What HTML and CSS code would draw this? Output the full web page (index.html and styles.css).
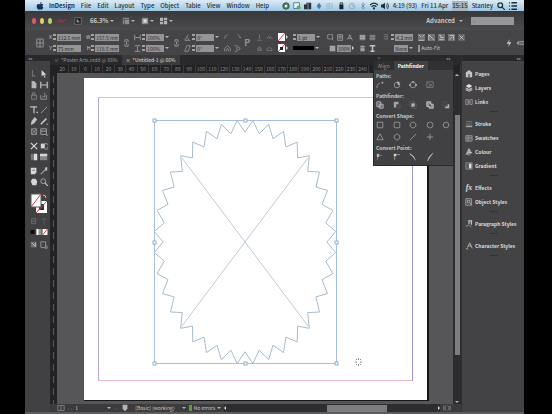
FILE: index.html
```html
<!DOCTYPE html>
<html lang="en">
<head>
    <meta charset="UTF-8">
    <meta name="viewport" content="width=device-width, initial-scale=1.0">
    <title>InDesign</title>
    <link rel="stylesheet" href="styles.css">
</head>
<body>
    <header class="menubar">
        <svg class="apple" viewBox="0 0 10 10"><path d="M5 3C6 2 8 2 9 3.3C7.600 4.300 7.800 6 9.200 6.700C8.600 8.500 7.500 10 6.500 9.600C5.500 9.200 5 9.300 4.200 9.600C2.500 10 .8 7.500.8 5.200C.8 2.800 3 2 5 3ZM5 2.500C5 1 6 .2 7 0C7 1.300 6.200 2.300 5 2.500Z"/></svg>
        <nav class="menus">
            <a href="#" class="app-name">InDesign</a>
            <a href="#">File</a>
            <a href="#">Edit</a>
            <a href="#">Layout</a>
            <a href="#">Type</a>
            <a href="#">Object</a>
            <a href="#">Table</a>
            <a href="#">View</a>
            <a href="#">Window</a>
            <a href="#">Help</a>
        </nav>
        <div class="tray">
            <svg viewBox="0 0 10 10"><circle cx="5" cy="5" r="4" fill="#4d8a64" stroke="#26483c"/><circle cx="5" cy="5" r="1.500" fill="#fff"/></svg>
            <svg viewBox="0 0 10 10"><rect x="1" y="1" width="7" height="7" fill="#e8f4fa" stroke="#3f6e92"/><circle cx="7" cy="7" r="2.500" fill="#5eb045"/></svg>
            <svg viewBox="0 0 10 10"><path d="M0 3h3V1h6v8H0Z" fill="#27333d"/><path d="M5 1v8" stroke="#94a9b8"/></svg>
            <svg viewBox="0 0 10 10"><path d="M5 1L8 5L5 9L2 5Z" fill="#3c81b4"/></svg>
            <svg viewBox="0 0 10 10"><path d="M1 2h7v6h-7zM1 5h7M4 2v6" fill="none" stroke="#9dbccd"/></svg>
            <svg viewBox="0 0 10 10"><path d="M3 3h5v6h-5z" fill="#16222e"/><path d="M4 3V1h3v2" fill="none" stroke="#16222e"/></svg>
            <svg viewBox="0 0 10 10"><circle cx="5" cy="5" r="3.500" fill="none" stroke="#8aa7bb"/><path d="M5 3v2h2" fill="none" stroke="#8aa7bb"/></svg>
            <svg viewBox="0 0 10 10"><path d="M3 3l4 4l-2 2V1l2 2l-4 4" fill="none" stroke="#6d8da4"/></svg>
            <svg viewBox="0 0 10 10"><path d="M0 4Q5-1 10 4M2 6Q5 3 8 6" fill="none" stroke="#1d3042" stroke-width="1.500"/><circle cx="5" cy="8" r="1.300" fill="#1d3042"/></svg>
            <svg viewBox="0 0 10 10"><path d="M0 3h2l3-2v8l-3-2h-2z" fill="#1d3042"/><path d="M7 3q1 2 0 4M8 1q3 4 0 8" fill="none" stroke="#1d3042"/></svg>
        </div>
        <div class="clock">
            <span>4:19 (93)</span>
            <span>Fri 11 Apr</span>
            <span class="time">15:15</span>
            <span>Stanley</span>
            <svg viewBox="0 0 10 10"><circle cx="4" cy="4" r="3" fill="none" stroke="#1d3042" stroke-width="1.500"/><path d="M6 6l4 4" stroke="#1d3042" stroke-width="1.500"/></svg>
            <svg viewBox="0 0 10 10"><path d="M0 1h1M3 1h7M0 5h1M3 5h7M0 9h1M3 9h7" stroke="#1d3042" stroke-width="2"/></svg>
        </div>
    </header>

    <div class="titlebar">
        <div class="lights">
            <button class="light red" aria-label="Close"></button>
            <button class="light yellow" aria-label="Minimise"></button>
            <button class="light green" aria-label="Zoom"></button>
        </div>
        <svg class="stock" viewBox="0 0 10 6"><path d="M0 5l3-3l2 2l5-3" fill="none" stroke="#8e3346" stroke-width="2"/></svg>
        <svg class="bridge" viewBox="0 0 10 10"><rect x="1" y="1" width="8" height="8" fill="#1f1e20" stroke="#77767a"/><path d="M4 3v4M4 5h2v2" stroke="#bbb" fill="none"/></svg>
        <button class="zoom">66.3% <i class="down"></i></button>
        <div class="views">
            <button aria-label="View options"><svg viewBox="0 0 10 10"><path d="M1 1h8v8h-8z" fill="#8d8c8e"/><path d="M1 3h8M3 3v6" stroke="#4b4a4c"/></svg><i class="down"></i></button>
            <button aria-label="Screen mode"><svg viewBox="0 0 10 10"><path d="M1 1h8v8h-8z" fill="#8d8c8e"/><path d="M3 3h4v4h-4z" fill="#e0e0e0"/></svg><i class="down"></i></button>
            <button aria-label="Arrange documents"><svg viewBox="0 0 10 10"><path d="M0 1h4v4h-4zM5 1h4v3h-4zM0 6h4v3h-4zM5 5h4v4h-4z" fill="#b5b4b6"/></svg><i class="down"></i></button>
        </div>
        <button class="advanced">Advanced <i class="down"></i></button>
        <input class="search" type="search" aria-label="Search" placeholder="⌕">
    </div>

    <div class="controls">
        <svg class="proxy" viewBox="0 0 10 12"><path d="M1 1h8v10h-8zM5 1v10M1 6h8" fill="none" stroke="#a3a2a4"/></svg>
        <div class="fields">
            <label>X <i class="step"></i><input class="wide" value="112.5 mm"></label>
            <label>Y <i class="step"></i><input class="wide" value="75 mm"></label>
        </div>
        <div class="fields">
            <label>W <i class="step"></i><input class="wide" value="157.5 mm"></label>
            <label>H <i class="step"></i><input class="wide" value="118.5 mm"></label>
        </div>
        <svg class="chain" viewBox="0 0 6 10"><path d="M1 4V1h4v3M1 6v3h4V6M3 3v4" fill="none" stroke="#a3a2a4"/></svg>
        <div class="fields scale">
            <label><svg viewBox="0 0 10 10"><path d="M1 1v8M9 1v8M2 5h6" fill="none" stroke="#b5b4b6"/></svg><i class="step"></i><input class="mid" aria-label="Scale X" value="100%"><i class="down"></i></label>
            <label><svg viewBox="0 0 10 10"><path d="M1 1h8M1 9h8M5 2v6" fill="none" stroke="#b5b4b6"/></svg><i class="step"></i><input class="mid" aria-label="Scale Y" value="100%"><i class="down"></i></label>
        </div>
        <svg class="chain" viewBox="0 0 6 10"><path d="M1 4V1h4v3M1 6v3h4V6M3 3v4" fill="none" stroke="#a3a2a4"/></svg>
        <div class="fields angle">
            <label><svg viewBox="0 0 10 10"><path d="M6 1l-5 8h8M5 5l2 4" fill="none" stroke="#a3a2a4"/></svg><i class="step"></i><input class="mid" aria-label="Rotation" value="0°"><i class="down"></i></label>
            <label><svg viewBox="0 0 10 10"><path d="M4 1h5l-3 8h-5z" fill="none" stroke="#a3a2a4"/></svg><i class="step"></i><input class="mid" aria-label="Shear" value="0°"><i class="down"></i></label>
        </div>
        <div class="icon-grid three">
            <svg viewBox="0 0 10 10"><path d="M1 6Q1 1 6 1M1 6l-1-2M1 6l2-2" fill="none" stroke="#858486"/></svg>
            <svg viewBox="0 0 10 10"><path d="M9 6Q9 1 4 1M9 6l1-2M9 6l-2-2" fill="none" stroke="#858486"/></svg>
            <b class="p-glyph">P</b>
            <svg viewBox="0 0 10 10"><path d="M1 9V5L5 1L9 5V9M3 9l2-4l2 4" fill="none" stroke="#a3a2a4"/></svg>
            <svg viewBox="0 0 10 10"><path d="M1 1h3l5 4l-5 4h-3M4 3v4" fill="none" stroke="#a3a2a4"/></svg>
        </div>
        <div class="icon-grid two">
            <svg viewBox="0 0 10 10"><path d="M5 1v6M2 9h6" stroke="#858486"/></svg>
            <svg viewBox="0 0 10 10"><path d="M1 7l3-4M6 3l3 4M5 4v3" stroke="#858486"/></svg>
            <svg viewBox="0 0 10 10"><path d="M5 2l3 4h-6zM2 8h6" fill="none" stroke="#858486"/></svg>
            <svg viewBox="0 0 10 10"><path d="M1 7l3-4M6 3l3 4M1 8h8" stroke="#858486"/></svg>
        </div>
        <div class="fields paint">
            <button aria-label="Fill"><svg class="swatch" viewBox="0 0 7 8"><rect width="7" height="8" fill="#fff"/><path d="M0 8L7 0" stroke="#d23b4f"/></svg><i class="right"></i></button>
            <button aria-label="Stroke"><svg class="swatch" viewBox="0 0 7 8"><rect width="7" height="8" fill="#fff"/><path d="M0 8L7 0" stroke="#d23b4f"/><rect x="2" y="3" width="3" height="3" fill="#222"/></svg><i class="right"></i></button>
        </div>
        <div class="fields stroke">
            <label><i class="step"></i><input class="mid" aria-label="Stroke weight" value="1 pt"><i class="down"></i></label>
            <button aria-label="Stroke type"><span class="line"></span><i class="down"></i></button>
        </div>
        <div class="fields effects">
            <div class="row">
                <svg viewBox="0 0 10 10"><path d="M1 1h7v6h-7zM7 7l2 2" fill="none" stroke="#a3a2a4"/></svg>
                <svg viewBox="0 0 10 10"><path d="M1 1h7v8h-7zM3 3h3v3h-3z" fill="none" stroke="#b5b4b6"/></svg>
                <svg viewBox="0 0 10 10"><path d="M1 8l3-7l3 7M2 6h4M8 8v1" fill="none" stroke="#b5b4b6"/></svg>
            </div>
            <label><svg viewBox="0 0 10 10"><path d="M1 1h8v8h-8z" fill="#a3a2a4"/></svg><input class="short" aria-label="Opacity" value="100%"><i class="right"></i></label>
        </div>
        <div class="icon-grid two">
            <svg viewBox="0 0 10 10"><path d="M1 1h8v8h-8z" fill="#858486"/><path d="M1 3h8M1 6h8" stroke="#ccc"/></svg>
            <svg viewBox="0 0 10 10"><path d="M1 1h8v8h-8z" fill="#6a696b"/><path d="M1 3h8M1 7h8" stroke="#aaa"/></svg>
            <svg viewBox="0 0 10 10"><path d="M2 1h6v8h-6z" fill="#a3a2a4"/><path d="M1 4h8" stroke="#5a595b"/></svg>
            <svg viewBox="0 0 10 10"><path d="M1 1h8M5 1v8M2 9h6" stroke="#c4c3c5" stroke-width="2"/></svg>
        </div>
        <div class="fields corner">
            <label><svg viewBox="0 0 10 10"><path d="M1 1h5v8M1 4h5M1 7h5" fill="none" stroke="#858486"/></svg><i class="step"></i><input class="mid" aria-label="Corner size" value="4.2 mm"></label>
            <label><input class="short" aria-label="Corner shape" value="None"><i class="down"></i></label>
        </div>
        <div class="fields fit">
            <div class="row">
                <svg viewBox="0 0 10 10"><path d="M0 0h10v10h-10z" fill="#737274"/><path d="M1 1l3 3M9 1l-3 3M1 9h8" stroke="#ddd"/></svg>
                <svg viewBox="0 0 10 10"><path d="M0 0h10v10h-10z" fill="#737274"/><path d="M1 1v8M1 1l8 8" stroke="#ddd"/></svg>
                <svg viewBox="0 0 10 10"><path d="M0 0h10v10h-10z" fill="#737274"/><path d="M2 2h2v3h4M2 8h6" fill="none" stroke="#ddd"/></svg>
                <svg viewBox="0 0 10 10"><path d="M0 0h10v10h-10z" fill="#737274"/><path d="M2 2h6v6M2 8l4-4" fill="none" stroke="#ddd"/></svg>
                <svg viewBox="0 0 10 10"><path d="M0 0h10v10h-10z" fill="#636264"/><path d="M2 2l6 6M8 2l-6 6" stroke="#ddd"/></svg>
            </div>
            <label class="auto"><input type="checkbox">Auto-Fit</label>
        </div>
        <div class="end">
            <svg viewBox="0 0 10 10"><path d="M6 0L2 6h3l-1 4l4-6h-3z" fill="#c4c3c5"/></svg>
            <svg viewBox="0 0 10 10"><path d="M1 5l2-2v4zM4 3h6M4 5h6M4 7h6" fill="#a3a2a4" stroke="#a3a2a4"/></svg>
        </div>
    </div>

    <main class="workspace">
        <aside class="toolbox">
            <div class="grip">◂◂</div>
            <div class="tools">
                <svg viewBox="0 0 10 10"><path d="M3 0v8l2-2l1 3" fill="none" stroke="#858486"/></svg>
                <svg viewBox="0 0 10 10"><path d="M2 0v8l2-2l2 4l1-1l-2-3h3z" fill="#d6d5d7"/></svg>
                <svg viewBox="0 0 10 10"><path d="M2 0h3l3 3v6h-6z" fill="#b5b4b6"/></svg>
                <svg viewBox="0 0 10 10"><path d="M1 1v8M9 1v8M2 5h6" stroke="#c4c3c5" stroke-width="1.500"/></svg>
                <svg viewBox="0 0 10 10"><path d="M2 4h6v5h-6zM3 4V1h3v3" fill="none" stroke="#8d8c8e"/></svg>
                <svg viewBox="0 0 10 10"><path d="M1 4v5h7V4M3 6h3M6 6V1" fill="none" stroke="#a3a2a4"/></svg>
            </div>
            <div class="tools">
                <svg viewBox="0 0 10 10"><path d="M1 2V1h7v1M5 1v8M8 8h2" fill="none" stroke="#c4c3c5" stroke-width="1.500"/></svg>
                <svg viewBox="0 0 10 10"><path d="M1 9L9 1" stroke="#a3a2a4"/></svg>
                <svg viewBox="0 0 10 10"><path d="M6 0l3 3l-4 5l-4 2l1-5z" fill="#c4c3c5"/></svg>
                <svg viewBox="0 0 10 10"><path d="M1 9L8 2" stroke="#c4c3c5" stroke-width="2"/><path d="M8 9h2" stroke="#c4c3c5"/></svg>
                <svg viewBox="0 0 10 10"><path d="M2 1h6v7h-6zM2 1l6 7M8 1l-6 7" fill="none" stroke="#a3a2a4"/></svg>
                <svg viewBox="0 0 10 10"><path d="M1 1h7v7h-7zM1 4h7M8 9h2" fill="none" stroke="#b5b4b6"/></svg>
            </div>
            <div class="tools">
                <svg viewBox="0 0 10 10"><path d="M1 1l8 8M9 1l-8 8" stroke="#d6d5d7" stroke-width="1.500"/></svg>
                <svg viewBox="0 0 10 10"><path d="M1 2h5v6h-5z" fill="#d6d5d7"/><path d="M6 2h3v2M9 6v3h-3" fill="none" stroke="#a3a2a4"/></svg>
                <svg viewBox="0 0 10 10"><path d="M1 1h8v8h-8z" fill="#77767a"/><path d="M5 1h4v8h-4z" fill="#e0e0e0"/></svg>
                <svg viewBox="0 0 10 10"><path d="M0 1h9v8h-9z" fill="#858486"/><path d="M0 1h9v3h-9z" fill="#d6d5d7"/></svg>
            </div>
            <div class="tools">
                <svg viewBox="0 0 10 10"><path d="M1 1h7v6l-2 2h-5z" fill="#d6d5d7"/><path d="M3 4h3" stroke="#5a595b"/></svg>
                <svg viewBox="0 0 10 10"><path d="M1 9l6-6" stroke="#a3a2a4" stroke-width="1.500"/><path d="M6 1l3-1v4l-2 1z" fill="#c4c3c5"/></svg>
                <svg viewBox="0 0 10 10"><path d="M1 4l2-3h4l2 3l-1 5h-5z" fill="#d6d5d7"/></svg>
                <svg viewBox="0 0 10 10"><circle cx="4" cy="4" r="3" fill="none" stroke="#b5b4b6"/><path d="M6 6l4 4" stroke="#c4c3c5" stroke-width="1.500"/></svg>
            </div>
            <svg class="fill-stroke" viewBox="0 0 18 21"><path d="M6 8h11v12h-11z" fill="#fff"/><path d="M9 11h5v6h-5z" fill="#302f31"/><path d="M6 20L17 8" stroke="#d23b4f"/><path d="M1 1h10v13h-10z" fill="#fff" stroke="#5a595b"/><path d="M1 14L11 1" stroke="#d23b4f"/><path d="M13 2q3 0 3 3" fill="none" stroke="#c4c3c5"/></svg>
            <div class="tools">
                <svg viewBox="0 0 10 10"><path d="M2 1h5v6h-5zM2 4h5" fill="none" stroke="#727173"/></svg>
                <svg viewBox="0 0 10 10"><path d="M2 1h6M5 1v7" stroke="#636264"/></svg>
            </div>
            <svg class="apply" viewBox="0 0 17 6"><path d="M0 1h4v4h-4z" fill="#0d0d0d"/><path d="M6 0h5v6h-5z" fill="#969597"/><path d="M6 0h2v6h-2z" fill="#fff"/><path d="M12 0h5v6h-5z" fill="#fff"/><path d="M12 6L17 0" stroke="#d23b4f"/></svg>
            <div class="tools">
                <svg viewBox="0 0 10 10"><path d="M1 1h7v7h-7z" fill="#727173"/><path d="M2 2l5 5M7 2v5" stroke="#ccc"/></svg>
                <svg viewBox="0 0 10 10"><path d="M1 1h6v7h-6zM7 5l2 2v2h-3" fill="none" stroke="#a3a2a4"/></svg>
            </div>
        </aside>

        <section class="document">
            <div class="tabs">
                <button class="tab"><span>×</span> *Poster Arts.indd @ 66%</button>
                <button class="tab active"><span>×</span> *Untitled-1 @ 66%</button>
            </div>
            <div class="ruler" id="ruler"></div>
            <div class="stage">
                <div class="v-ruler"></div>
                <div class="canvas">
                    <svg class="artwork" viewBox="0 0 396 331">
                        <path d="M27 327h344v-322" fill="none" stroke="#161616" stroke-width="2"/>
                        <rect x="27" y="5" width="343" height="322" fill="#fff"/>
                        <path d="M41.500 308V24.500" stroke="#b7a8d4"/>
                        <path d="M355.500 308V24.500" stroke="#a593cc"/>
                        <path d="M41 24.500h314M41 307.500h314" stroke="#ecb6d8"/>
                        <path d="M97.500 47.500h182v243h-182z" fill="none" stroke="#a5bfdc"/>
                        <path d="M125 85L251 253M251 85L125 253" stroke="#bccada"/>
                        <polygon id="burst" fill="none" stroke="#a9bccd"/>
                        <g fill="#fff" stroke="#93aecb">
                            <rect x="96" y="46" width="3" height="3"/>
                            <rect x="187" y="46" width="3" height="3"/>
                            <rect x="278" y="46" width="3" height="3"/>
                            <rect x="96" y="168" width="3" height="3"/>
                            <rect x="278" y="168" width="3" height="3"/>
                            <rect x="96" y="289" width="3" height="3"/>
                            <rect x="187" y="289" width="3" height="3"/>
                            <rect x="278" y="289" width="3" height="3"/>
                        </g>
                        <path d="M298 289h2M303 289h2M301.500 285v2M301.500 291v2M299 286l1 1M304 286l-1 1M299 292l1-1M304 292l-1-1" stroke="#8f8f8f"/>
                    </svg>
                </div>
                <div class="v-scroll"><i class="up"></i><span class="thumb"></span><i class="down"></i></div>
            </div>
            <footer class="status">
                <svg viewBox="0 0 10 8"><path d="M1 1h8v6h-8zM5 1v6" fill="none" stroke="#8d8c8e"/></svg>
                <span class="dim">‹ ‹</span>
                <button class="page-no">1 <i class="down"></i></button>
                <span class="dim">› ›</span>
                <svg viewBox="0 0 10 8"><path d="M2 0h6v5l-3 3l-3-3z" fill="#b5b4b6"/></svg>
                <button class="profile">[Basic] (working) <i class="down"></i></button>
                <button class="preflight"><span class="ok"></span>No errors <i class="down"></i></button>
                <div class="h-scroll"><i class="left"></i><span class="thumb"></span><i class="right"></i></div>
                <svg viewBox="0 0 10 8"><path d="M1 1v6M4 1l-2 3l2 3M6 1l2 3l-2 3M9 1v6" fill="none" stroke="#8d8c8e"/></svg>
            </footer>

            <div class="pathfinder">
                <div class="grip"><span>×</span><span>◂◂</span></div>
                <div class="panel-tabs">
                    <button>Align</button>
                    <button class="active">Pathfinder</button>
                </div>
                <div class="panel-body">
                    <h2>Paths:</h2>
                    <div class="ops">
                        <svg viewBox="0 0 10 10"><path d="M1 9Q1 3 5 3" fill="none" stroke="#a3a2a4"/><path d="M7 1h2v2h-2z" fill="#b5b4b6"/></svg>
                        <svg viewBox="0 0 10 10"><circle cx="5" cy="5" r="3.500" fill="none" stroke="#a3a2a4"/><path d="M5 1h3v4h-2z" fill="#b5b4b6"/></svg>
                        <svg viewBox="0 0 10 10"><circle cx="5" cy="5" r="3.500" fill="none" stroke="#a3a2a4"/><path d="M0 4h2v2h-2zM8 4h2v2h-2zM4 0h2v2h-2z" fill="#b5b4b6"/></svg>
                        <svg viewBox="0 0 10 10"><path d="M1 1h8v7h-8zM3 3l4 2l-4 2" fill="none" stroke="#858486"/></svg>
                    </div>
                    <h2>Pathfinder:</h2>
                    <div class="ops">
                        <svg viewBox="0 0 10 10"><path d="M1 1h5v6h-5zM4 4h5v5h-5z" fill="#636264" stroke="#c4c3c5"/></svg>
                        <svg viewBox="0 0 10 10"><path d="M1 1h6v3h-3v4h-3z" fill="#a3a2a4"/><path d="M5 5h4v4h-4z" fill="none" stroke="#5a595b"/></svg>
                        <svg viewBox="0 0 10 10"><path d="M1 1h6v6h-6zM4 4h5v5h-5z" fill="none" stroke="#5f5e60"/><path d="M3 3h4v4h-4z" fill="#b5b4b6"/></svg>
                        <svg viewBox="0 0 10 10"><path d="M1 1h5v6h-5zM4 4h5v5h-5z" fill="#858486" stroke="#d6d5d7"/><path d="M4 4h2v3h-2z" fill="#414042"/></svg>
                        <svg viewBox="0 0 10 10"><path d="M1 1h5v5h-5z" fill="none" stroke="#555456"/><path d="M7 4h2v5h-5v-2h3z" fill="#b5b4b6"/></svg>
                    </div>
                    <h2>Convert Shape:</h2>
                    <div class="ops shapes">
                        <svg viewBox="0 0 10 10"><path d="M1.500 1.500h7v7h-7z"/></svg>
                        <svg viewBox="0 0 10 10"><rect x="1.500" y="1.500" width="7" height="7" rx="1"/></svg>
                        <svg viewBox="0 0 10 10"><path d="M3.500 1.500h3l2 2v3l-2 2h-3l-2-2v-3z"/></svg>
                        <svg viewBox="0 0 10 10"><rect x="1.500" y="1.500" width="7" height="7" rx="3"/></svg>
                        <svg viewBox="0 0 10 10"><circle cx="5" cy="5" r="3.500"/></svg>
                        <svg viewBox="0 0 10 10"><path d="M5 1L9 8.500H1Z"/></svg>
                        <svg viewBox="0 0 10 10"><path d="M5 1L8.500 3.500V6.500L5 9L1.500 6.500V3.500Z"/></svg>
                        <svg viewBox="0 0 10 10"><path d="M1 9L9 1"/></svg>
                        <svg viewBox="0 0 10 10"><path d="M5 1v8M1 5h8"/></svg>
                    </div>
                    <h2>Convert Point:</h2>
                    <div class="ops">
                        <svg viewBox="0 0 10 10"><path d="M2 9V3h6" fill="none" stroke="#858486"/><path d="M1 1h3v4h-3z" fill="#b5b4b6"/></svg>
                        <svg viewBox="0 0 10 10"><path d="M2 9V2h7" fill="none" stroke="#a3a2a4"/><path d="M1 1h3v3h-3z" fill="#d6d5d7"/></svg>
                        <svg viewBox="0 0 10 10"><path d="M1 1Q6 3 8 9M1 1l6 5" fill="none" stroke="#c4c3c5"/></svg>
                        <svg viewBox="0 0 10 10"><path d="M9 0Q3 4 2 10M7 2l-4 6" fill="none" stroke="#c4c3c5"/></svg>
                    </div>
                </div>
            </div>
        </section>

        <aside class="dock">
            <div class="grip">▸▸</div>
            <div class="group">
                <button><svg viewBox="0 0 10 10"><path d="M1 3l4-3l4 3v6h-8z" fill="#c4c3c5"/><path d="M4 5h2v4h-2z" fill="#636264"/></svg>Pages</button>
                <button><svg viewBox="0 0 10 10"><path d="M5 0l4 2.500l-4 2.500l-4-2.500z" fill="#e0e0e0"/><path d="M1 5l4 2l4-2M1 7l4 2l4-2" fill="none" stroke="#b5b4b6" stroke-width="1.500"/></svg>Layers</button>
                <button><svg viewBox="0 0 10 10"><path d="M1 2h3v6h-3zM6 2h3v6h-3zM3 5h4" fill="none" stroke="#a3a2a4"/></svg>Links</button>
            </div>
            <div class="group">
                <button><svg viewBox="0 0 10 10"><path d="M1 2h8M1 5h8" stroke="#858486"/><path d="M1 8h8" stroke="#a3a2a4" stroke-width="2"/></svg>Stroke</button>
                <button><svg viewBox="0 0 10 10"><path d="M1 2h8v7h-8zM1 5h8M4 2v7" fill="#636264" stroke="#969597"/></svg>Swatches</button>
                <button><svg viewBox="0 0 10 10"><path d="M5 0Q9 4 8 7Q5 11 2 8Q0 6 5 0Z" fill="#858486"/><path d="M5 1v4l4 1M5 5l-4 3" fill="none" stroke="#e0e0e0"/></svg>Colour</button>
                <button><svg viewBox="0 0 10 10"><path d="M1 1h8v8h-8z" fill="#5a595b" stroke="#8d8c8e"/><path d="M5 2h3v6h-3z" fill="#e0e0e0"/></svg>Gradient</button>
            </div>
            <div class="group">
                <button><em>fx</em>Effects</button>
                <button><svg viewBox="0 0 10 10"><path d="M1 1h7v8h-7zM3 3h3v3h-3zM6 6l3 3" fill="none" stroke="#b5b4b6"/></svg>Object Styles</button>
            </div>
            <div class="group">
                <button><svg viewBox="0 0 10 10"><path d="M4 1h5M5 1v4M8 1v5" stroke="#c4c3c5" stroke-width="1.500"/><path d="M1 8l4-2l3 3" fill="none" stroke="#a3a2a4"/></svg>Paragraph Styles</button>
            </div>
            <div class="group">
                <button><svg viewBox="0 0 10 10"><path d="M3 7l3-6l3 7M4 5h4M1 8l3 1" fill="none" stroke="#c4c3c5"/></svg>Character Styles</button>
            </div>
        </aside>
    </main>
    <script src="script.js"></script>
</body>
</html>
```
FILE: styles.css
```css
* {
    box-sizing: border-box;
}
body {
    margin: 0;
    padding: 0 28px 0 25px;
    min-height: 100vh;
    display: flex;
    flex-direction: column;
    background: #000;
    color: #c9c8ca;
    font-family: "Noto Sans CJK SC", "Liberation Sans", Arial, sans-serif;
    font-size: 5px;
    line-height: 6px;
}
button, input {
    font: inherit;
    color: inherit;
    border: 0;
    padding: 0;
    margin: 0;
    background: none;
}
button {
    display: flex;
    align-items: center;
    white-space: nowrap;
}
svg {
    display: block;
    width: 8px;
    height: 8px;
    flex: none;
}

/* little arrows */
.down, .up, .left, .right {
    flex: none;
    border: 2px solid transparent;
}
.down {
    border-top-color: #b5b4b6;
    border-bottom-width: 0;
}
.up {
    border-bottom-color: #b5b4b6;
    border-top-width: 0;
}
.left {
    border-right-color: #d6d5d7;
    border-left-width: 0;
}
.right {
    border-left-color: #d6d5d7;
    border-right-width: 0;
}
.step {
    width: 3px;
    height: 6px;
    border-top: 2px solid #a3a2a4;
    border-bottom: 2px solid #a3a2a4;
    flex: none;
}

/* menu bar */
.menubar {
    display: flex;
    align-items: center;
    height: 11px;
    padding: 0 7px 0 11px;
    background: linear-gradient(#dcebf5, #9fc6e2);
    color: #1d3042;
    font-size: 6px;
    font-weight: 500;
    line-height: 10px;
    white-space: nowrap;
}
.apple {
    fill: #12345c;
    margin-right: 5px;
}
.menus {
    display: flex;
    gap: 6px;
}
.menus a {
    color: inherit;
    text-decoration: none;
}
.menus .app-name {
    font-weight: bold;
}
.tray {
    display: flex;
    gap: 3px;
    margin-left: auto;
}
.clock {
    display: flex;
    align-items: center;
    gap: 4px;
    margin-left: 4px;
}
.time {
    background: #aab4bb;
}

/* title bar */
.titlebar {
    display: flex;
    align-items: center;
    height: 19px;
    padding: 0 10px 0 7px;
    background: linear-gradient(#39383a, #4b4a4c);
}
.lights {
    display: flex;
    gap: 4px;
}
.light {
    width: 4px;
    height: 6px;
    border-radius: 50%;
}
.red {
    background: #e0596a;
}
.yellow {
    background: #e5cf5c;
}
.green {
    background: #b9cf63;
}
.stock {
    margin-left: 6px;
}
.bridge {
    margin-left: 8px;
}
.zoom {
    margin-left: 8px;
    gap: 2px;
    font-size: 6px;
    font-weight: bold;
}
.views {
    display: flex;
    gap: 6px;
    margin-left: 8px;
}
.views button {
    gap: 1px;
}
.advanced {
    margin-left: auto;
    gap: 4px;
    font-size: 6px;
    font-weight: bold;
}
.search {
    width: 43px;
    height: 8px;
    margin-left: 8px;
    padding: 0 2px;
    background: #979698;
    color: #333;
}

/* control bar */
.controls {
    display: flex;
    align-items: center;
    gap: 5px;
    height: 25px;
    padding: 0 0 0 11px;
    background: #454446;
}
.proxy {
    height: 12px;
}
.fields {
    display: flex;
    flex-direction: column;
    gap: 3px;
}
.fields label, .fields .row, .fields button {
    display: flex;
    align-items: center;
    gap: 1px;
    height: 8px;
}
.fields label {
    justify-content: flex-end;
}
.fields input {
    height: 7px;
    padding: 0 1px;
    background: #949395;
    color: #2e2d2f;
}
.fields svg, .icon-grid svg {
    width: 7px;
    height: 7px;
}
.fields .wide {
    width: 24px;
}
.fields .mid {
    width: 18px;
}
.fields .short {
    width: 14px;
}
.chain {
    width: 5px;
}
.icon-grid {
    display: grid;
    gap: 4px 3px;
}
.icon-grid.three {
    grid-template-columns: repeat(3, 7px);
}
.icon-grid.two {
    grid-template-columns: repeat(2, 7px);
}
.p-glyph {
    grid-row: span 2;
    align-self: center;
    font-size: 9px;
    color: #969597;
}
.fields .swatch {
    height: 8px;
}
.line {
    width: 21px;
    height: 4px;
    background: #000;
}
.effects {
    margin-left: 2px;
}
.corner {
    margin-left: 2px;
}
.effects .row, .fit .row {
    gap: 3px;
}
.fields .auto {
    justify-content: flex-start;
}
.auto input {
    width: 0;
    appearance: none;
}
.end {
    display: flex;
    gap: 3px;
    margin-left: auto;
}

/* workspace */
.workspace {
    flex: 1;
    display: grid;
    grid-template-columns: 25px 1fr 63px;
    background: #414042;
    border-bottom: 3px solid #5c5b5d;
}
.grip {
    height: 6px;
    background: #29282a;
    color: #98979a;
    font-size: 4px;
    display: flex;
    justify-content: space-between;
    padding: 0 3px;
}
.toolbox {
    display: flex;
    flex-direction: column;
}
.tools {
    display: grid;
    grid-template-columns: 8px 8px;
    gap: 3px 2px;
    padding: 4px 0 0 5px;
}
.grip + .tools {
    padding-top: 9px;
}
.tools + .tools {
    padding-top: 6px;
}
.fill-stroke {
    width: 18px;
    height: 21px;
    margin: 7px 0 0 5px;
}
.apply {
    width: 18px;
    height: 6px;
    margin: 3px 0 2px 5px;
}

/* document window */
.document {
    position: relative;
    display: flex;
    flex-direction: column;
    min-width: 0;
    background: #565557;
}
.tabs {
    display: flex;
    height: 10px;
    background: #29282a;
}
.tab {
    gap: 2px;
    padding: 0 4px;
    color: #98979a;
}
.tab.active {
    background: #3b3a3c;
    color: #e0e0e0;
}
.ruler {
    display: flex;
    height: 8px;
    padding-left: 7px;
    background: #222123;
    color: #8d8c8e;
    line-height: 8px;
}
.ruler span {
    flex: 1;
    min-width: 0;
    text-align: center;
    border-right: 1px solid #3b3a3c;
}
.stage {
    flex: 1;
    display: flex;
}
.v-ruler {
    width: 7px;
    background: repeating-linear-gradient(#222123 0 3px, #59585a 3px 10px, #222123 10px 12px) 3px 0 / 1px 100% no-repeat #222123;
}
.canvas {
    flex: 1;
    min-width: 0;
}
.artwork {
    width: 100%;
    height: auto;
}
.v-scroll {
    width: 8px;
    display: flex;
    flex-direction: column;
    align-items: center;
    background: #2d2c2e;
    padding: 1px 0;
}
.v-scroll .thumb {
    width: 5px;
    height: 73%;
    margin: auto;
    margin-bottom: 46px;
    background: #7d7c7e;
}
.status {
    display: flex;
    align-items: center;
    gap: 3px;
    height: 8px;
    padding: 0 10px 0 7px;
    background: #3b3a3c;
}
.dim {
    color: #77767a;
}
.page-no {
    width: 36px;
    justify-content: space-between;
}
.profile {
    width: 54px;
    padding-left: 3px;
    justify-content: space-between;
}
.preflight {
    gap: 2px;
    width: 32px;
}
.preflight .down {
    margin-left: auto;
}
.ok {
    width: 4px;
    height: 6px;
    background: #5d9e3d;
}
.h-scroll {
    flex: 1;
    display: flex;
    align-items: center;
    justify-content: space-between;
    height: 8px;
    background: #2d2c2e;
}
.h-scroll .thumb {
    width: 28%;
    height: 7px;
    background: #7d7c7e;
    margin-left: 50px;
}

/* pathfinder panel floats over the document */
.pathfinder {
    position: absolute;
    top: 0;
    right: 7px;
    width: 81px;
    background: #414042;
    border: 1px solid #29282a;
    border-top: 0;
}
.panel-tabs {
    display: flex;
    height: 9px;
    background: #302f31;
}
.panel-tabs button {
    padding: 0 4px;
    color: #98979a;
}
.panel-tabs .active {
    background: #414042;
    color: #fff;
    font-weight: bold;
}
.panel-body {
    padding: 3px 3px 0 2px;
}
.panel-body h2 {
    margin: 0;
    font-size: 5px;
    line-height: 6px;
    font-weight: bold;
}
.ops {
    display: grid;
    grid-template-columns: repeat(5, 8px);
    justify-content: space-between;
    gap: 4px 0;
    padding: 2px 0 4px;
}
.shapes svg {
    fill: none;
    stroke: #a3a2a4;
}

/* dock */
.dock {
    border-left: 1px solid #302f31;
    background: #434244;
}
.dock .grip {
    justify-content: flex-end;
}
.group {
    padding-bottom: 3px;
    margin: 0 0 5px;
    background: linear-gradient(#333234, #333234) 28px 100% / 8px 1px no-repeat;
}
.grip + .group {
    padding-top: 6px;
}
.group button {
    height: 14px;
    padding-left: 3px;
    gap: 2px;
    font-weight: bold;
    color: #dddcde;
}
.group em {
    width: 8px;
    font-family: "Liberation Serif", serif;
    font-size: 8px;
}
```
FILE: script.js
```js
// ruler labels, 10 mm apart, starting 20 mm left of the page
const ruler = document.getElementById("ruler");
for (let mm = -20; mm <= 320; mm += 10) {
    const label = document.createElement("span");
    // the last part lies under the pathfinder panel
    if (mm <= 240) {
        label.textContent = Math.abs(mm);
    }
    ruler.appendChild(label);
}

// starburst: 36 tips, every other point pulled in
const points = [];
for (let deg = 0; deg < 360; deg += 5) {
    const r = deg % 10 === 0 ? 0.9 : 1;
    const a = deg * Math.PI / 180;
    points.push((188 + 91 * r * Math.sin(a)).toFixed(1) + "," + (169 - 122 * r * Math.cos(a)).toFixed(1));
}
document.getElementById("burst").setAttribute("points", points.join(" "));
```
